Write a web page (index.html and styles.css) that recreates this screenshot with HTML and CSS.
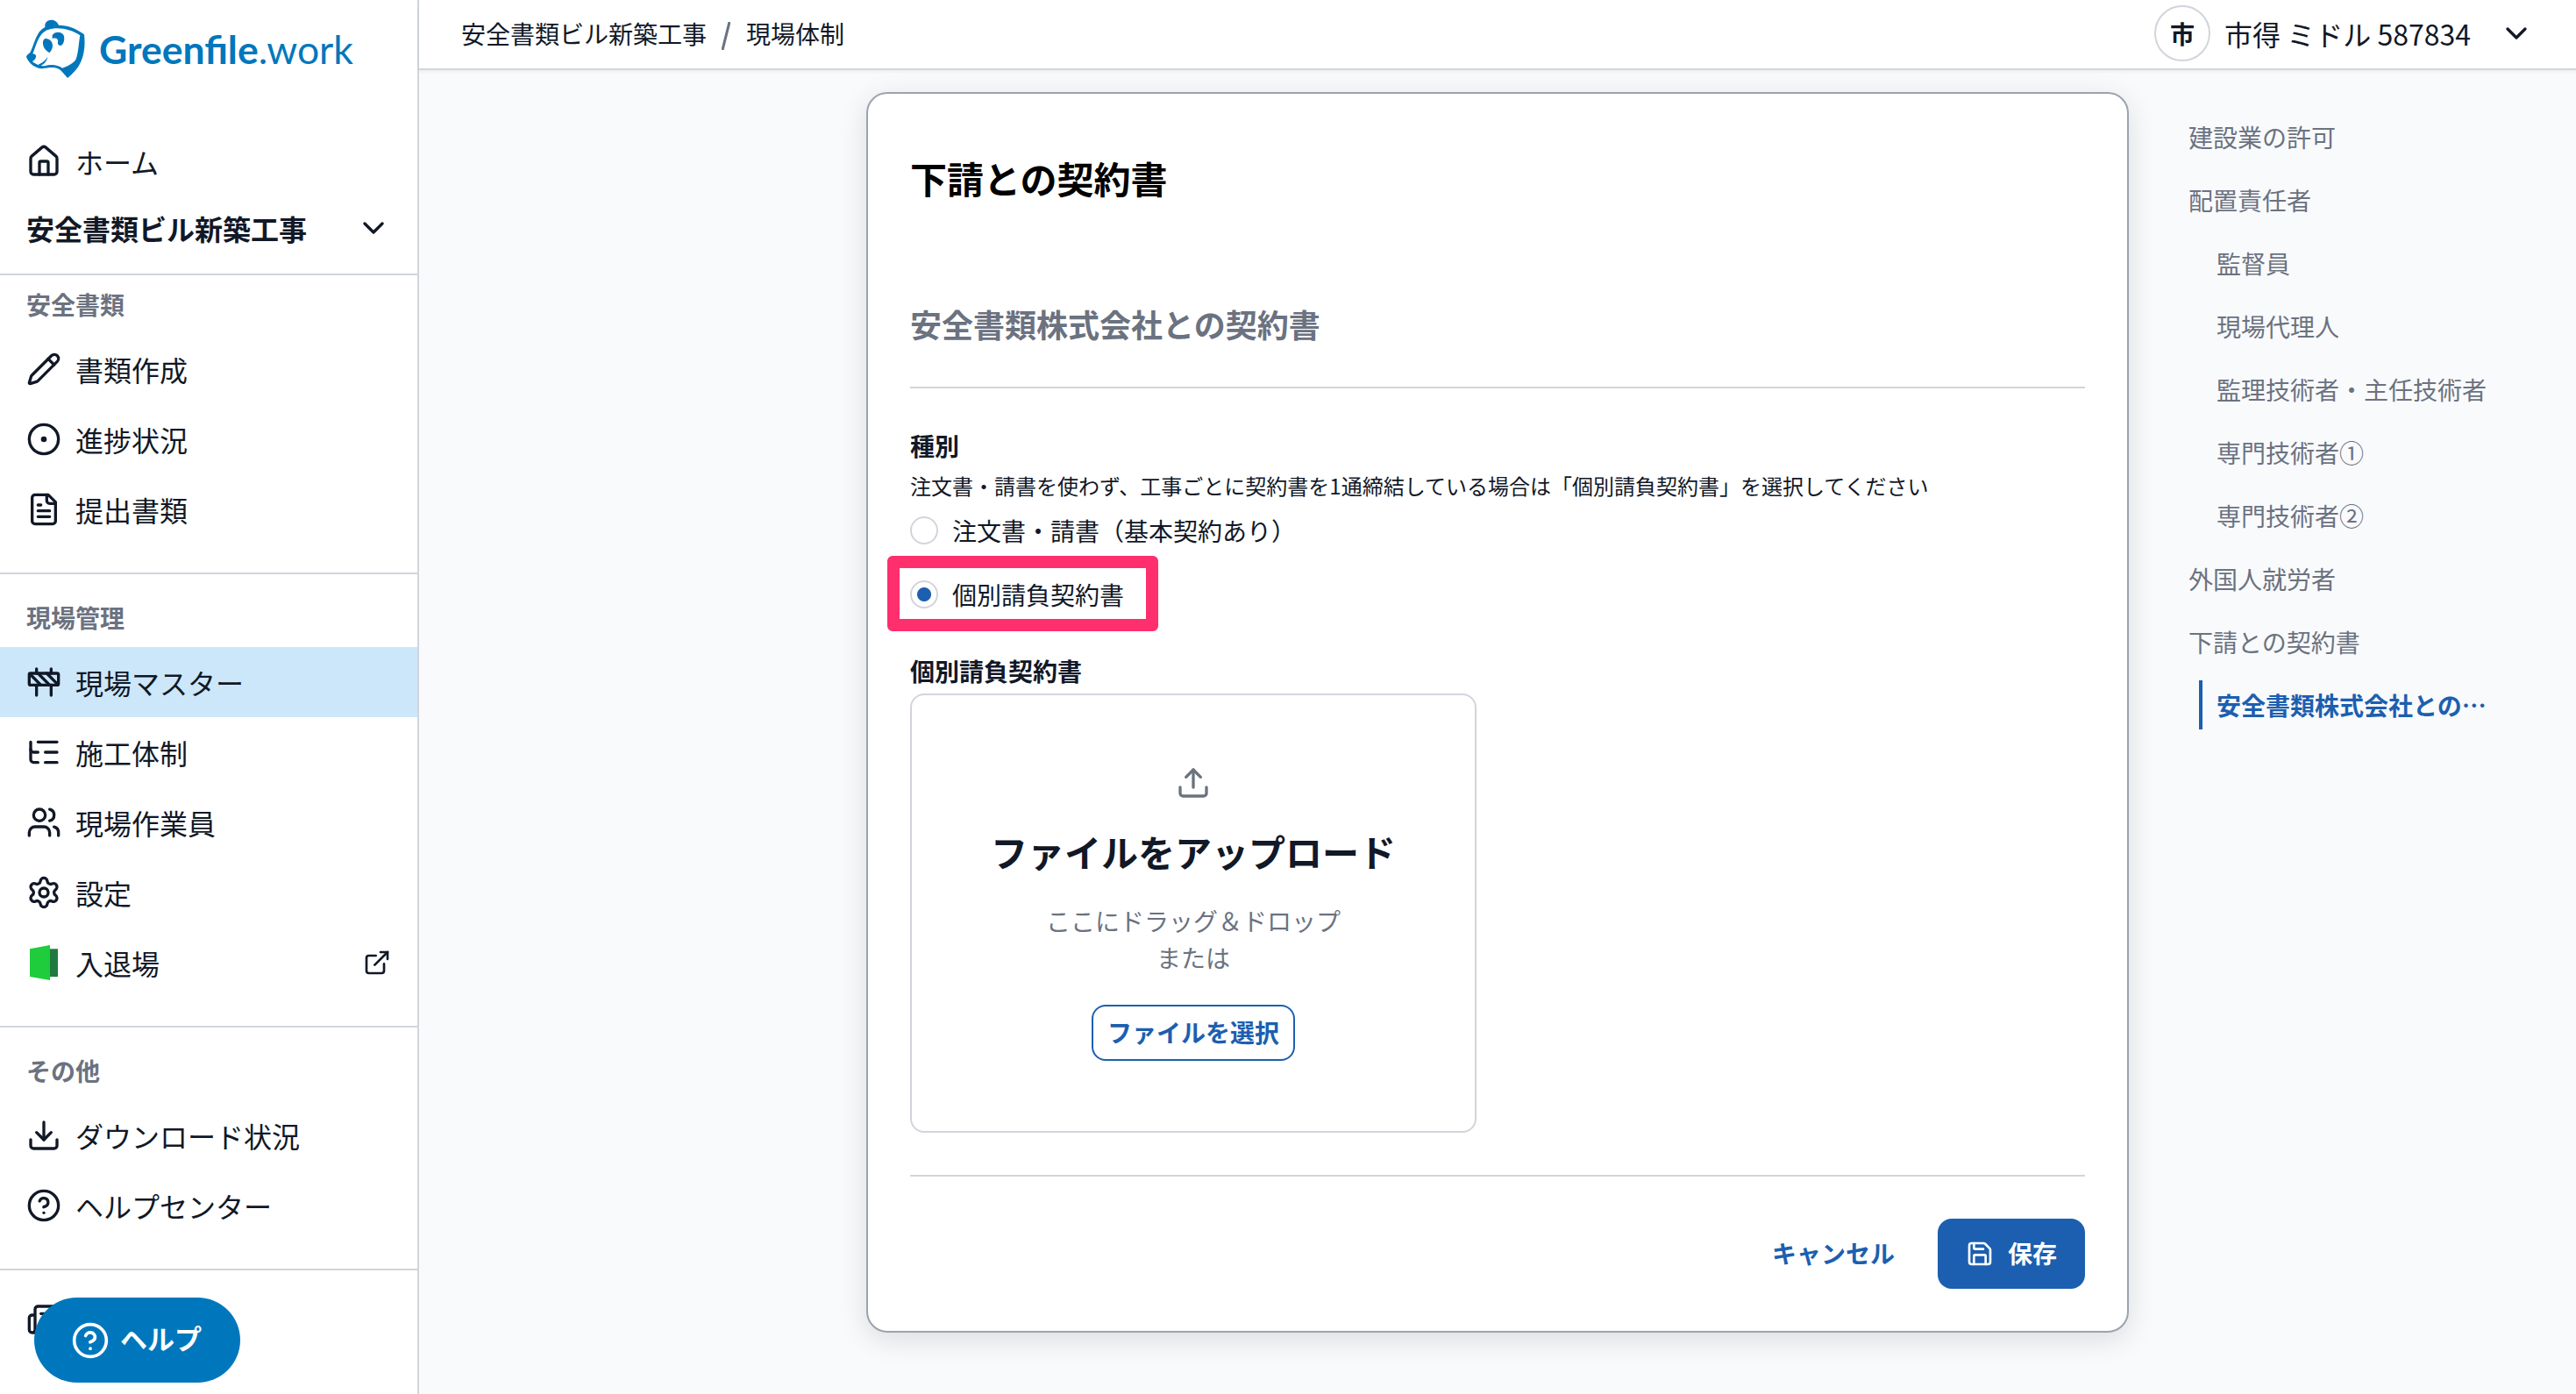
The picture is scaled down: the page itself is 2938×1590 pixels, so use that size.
FILE: index.html
```html
<!DOCTYPE html>
<html lang="ja">
<head>
    <meta charset="UTF-8">
    <meta name="viewport" content="width=device-width, initial-scale=1.0">
    <title>現場体制 | Greenfile.work</title>
    <link rel="stylesheet" href="styles.css">
</head>
<body>

<div class="app">
    <aside class="sidebar">
        <a class="logo" href="#">
            <svg class="logo-mark" viewBox="0 0 240 240">
                <path fill-rule="evenodd" d="M12 147 C14 136 23 137 27 128 C36 108 42 84 52 68 C58 58 66 50 76 45 C74 29 84 20 98 20 C110 20 118 27 123 38 C152 38 184 50 210 70 C214 104 211 136 199 163 C189 186 172 204 153 219 C144 208 135 198 126 190 C111 179 88 183 66 187 C42 186 20 168 12 147 Z M44 150 C47 143 46 138 34 136 C42 118 48 92 60 75 C70 60 84 52 102 50 C136 46 170 56 196 73 C190 108 190 136 181 157 C172 169 152 180 136 185 C116 172 96 171 74 178 C54 178 40 168 32 162 C38 160 42 156 44 150 Z"/>
                <path d="M76 84 C90 82 103 94 102 110 C101 120 96 126 91 133 C80 126 70 116 69 103 C68 94 70 87 76 84 Z"/>
                <path d="M101 72 C110 58 136 58 141 76 C144 92 138 106 130 108 C122 108 118 103 120 96 C122 86 116 80 101 84 Z"/>
                <path d="M85 147 C82 162 72 174 58 178 L52 173 C68 168 77 158 85 147 Z"/>
            </svg>
            <span class="logo-text"><b>Greenfile</b>.work</span>
        </a>

        <nav>
            <a class="nav-item" href="#">
                <svg class="icon" viewBox="0 0 24 24"><path d="M15 21v-8a1 1 0 0 0-1-1h-4a1 1 0 0 0-1 1v8"/><path d="M3 10a2 2 0 0 1 .709-1.528l7-5.999a2 2 0 0 1 2.582 0l7 5.999A2 2 0 0 1 21 10v9a2 2 0 0 1-2 2H5a2 2 0 0 1-2-2z"/></svg>
                <span>ホーム</span>
            </a>
            <div class="site-select">
                <span>安全書類ビル新築工事</span>
                <svg class="icon" viewBox="0 0 24 24"><path d="m6 9 6 6 6-6"/></svg>
            </div>

            <section class="nav-group first">
                <h3>安全書類</h3>
                <a class="nav-item" href="#">
                    <svg class="icon" viewBox="0 0 24 24"><path d="M21.174 6.812a1 1 0 0 0-3.986-3.987L3.842 16.174a2 2 0 0 0-.5.83l-1.321 4.352a.5.5 0 0 0 .623.622l4.353-1.32a2 2 0 0 0 .83-.497z"/><path d="m15 5 4 4"/></svg>
                    <span>書類作成</span>
                </a>
                <a class="nav-item" href="#">
                    <svg class="icon" viewBox="0 0 24 24"><circle cx="12" cy="12" r="10"/><circle cx="12" cy="12" r="1"/></svg>
                    <span>進捗状況</span>
                </a>
                <a class="nav-item" href="#">
                    <svg class="icon" viewBox="0 0 24 24"><path d="M15 2H6a2 2 0 0 0-2 2v16a2 2 0 0 0 2 2h12a2 2 0 0 0 2-2V7Z"/><path d="M14 2v4a2 2 0 0 0 2 2h4"/><path d="M10 9H8M16 13H8M16 17H8"/></svg>
                    <span>提出書類</span>
                </a>
            </section>

            <section class="nav-group">
                <h3>現場管理</h3>
                <a class="nav-item active" href="#">
                    <svg class="icon" viewBox="0 0 24 24"><rect x="2" y="6" width="20" height="8" rx="1"/><path d="M17 14v7M7 14v7M17 3v3M7 3v3M10 14 2.3 6.3M14 6l7.7 7.7M8 6l8 8"/></svg>
                    <span>現場マスター</span>
                </a>
                <a class="nav-item" href="#">
                    <svg class="icon" viewBox="0 0 24 24"><path d="M8 5h13M13 12h8M13 19h8"/><path d="M3 10a2 2 0 0 0 2 2h3"/><path d="M3 5v12a2 2 0 0 0 2 2h3"/></svg>
                    <span>施工体制</span>
                </a>
                <a class="nav-item" href="#">
                    <svg class="icon" viewBox="0 0 24 24"><path d="M16 21v-2a4 4 0 0 0-4-4H6a4 4 0 0 0-4 4v2"/><circle cx="9" cy="7" r="4"/><path d="M22 21v-2a4 4 0 0 0-3-3.87"/><path d="M16 3.13a4 4 0 0 1 0 7.75"/></svg>
                    <span>現場作業員</span>
                </a>
                <a class="nav-item" href="#">
                    <svg class="icon" viewBox="0 0 24 24"><path d="M9.671 4.136a2.34 2.34 0 0 1 4.659 0 2.34 2.34 0 0 0 3.319 1.915 2.34 2.34 0 0 1 2.33 4.033 2.34 2.34 0 0 0 0 3.831 2.34 2.34 0 0 1-2.33 4.033 2.34 2.34 0 0 0-3.319 1.915 2.34 2.34 0 0 1-4.659 0 2.34 2.34 0 0 0-3.32-1.915 2.34 2.34 0 0 1-2.33-4.033 2.34 2.34 0 0 0 0-3.831A2.34 2.34 0 0 1 6.35 6.051a2.34 2.34 0 0 0 3.319-1.915"/><circle cx="12" cy="12" r="3"/></svg>
                    <span>設定</span>
                </a>
                <a class="nav-item" href="#">
                    <svg class="door" viewBox="0 0 40 40"><path fill="#1f7a40" d="M27 4.3h9v31.8h-9z"/><path fill="#1fcc3b" d="M4 4.3 27 0v40L4 36.1z"/></svg>
                    <span>入退場</span>
                    <svg class="icon external" viewBox="0 0 24 24"><path d="M15 3h6v6"/><path d="M10 14 21 3"/><path d="M18 13v6a2 2 0 0 1-2 2H5a2 2 0 0 1-2-2V8a2 2 0 0 1 2-2h6"/></svg>
                </a>
            </section>

            <section class="nav-group">
                <h3>その他</h3>
                <a class="nav-item" href="#">
                    <svg class="icon" viewBox="0 0 24 24"><path d="M21 15v4a2 2 0 0 1-2 2H5a2 2 0 0 1-2-2v-4"/><path d="m7 10 5 5 5-5"/><path d="M12 15V3"/></svg>
                    <span>ダウンロード状況</span>
                </a>
                <a class="nav-item" href="#">
                    <svg class="icon" viewBox="0 0 24 24"><circle cx="12" cy="12" r="10"/><path d="M9.09 9a3 3 0 0 1 5.83 1c0 2-3 3-3 3"/><path d="M12 17h.01"/></svg>
                    <span>ヘルプセンター</span>
                </a>
            </section>

            <section class="nav-group last">
                <a class="nav-item" href="#">
                    <svg class="icon" viewBox="0 0 24 24"><path d="M4 21h16a2 2 0 0 0 2-2V5a2 2 0 0 0-2-2H8a2 2 0 0 0-2 2v14a2 2 0 0 1-4 0v-8a2 2 0 0 1 2-2h2"/><path d="M18 8h-8M18 13h-8"/></svg>
                </a>
            </section>
        </nav>
    </aside>

    <div class="content">
        <header class="topbar">
            <div class="breadcrumb">
                <span>安全書類ビル新築工事</span>
                <svg class="slash" viewBox="0 0 10 32"><path d="M9 0 1 32"/></svg>
                <span>現場体制</span>
            </div>
            <div class="user">
                <span class="avatar">市</span>
                <span class="user-name">市得 ミドル 587834</span>
                <svg class="icon" viewBox="0 0 24 24"><path d="m6 9 6 6 6-6"/></svg>
            </div>
        </header>

        <div class="page">
            <main class="card">
                <h1>下請との契約書</h1>
                <h2>安全書類株式会社との契約書</h2>

                <form>
                    <div class="label">種別</div>
                    <p class="note">注文書・請書を使わず、工事ごとに契約書を1通締結している場合は「個別請負契約書」を選択してください</p>
                    <label class="radio">
                        <input type="radio" name="type">
                        <span>注文書・請書（基本契約あり）</span>
                    </label>
                    <label class="radio marked">
                        <input type="radio" name="type" checked>
                        <span>個別請負契約書</span>
                    </label>

                    <div class="label upload-label">個別請負契約書</div>
                    <div class="upload">
                        <svg class="icon" viewBox="0 0 24 24"><path d="M21 15v4a2 2 0 0 1-2 2H5a2 2 0 0 1-2-2v-4"/><path d="m17 8-5-5-5 5"/><path d="M12 3v12"/></svg>
                        <div class="upload-title">ファイルをアップロード</div>
                        <p>ここにドラッグ＆ドロップ<br>または</p>
                        <button type="button" class="btn-outline">ファイルを選択</button>
                    </div>

                    <div class="actions">
                        <button type="button" class="btn-text">キャンセル</button>
                        <button type="button" class="btn-save">
                            <svg class="icon" viewBox="0 0 24 24"><path d="M15.2 3a2 2 0 0 1 1.4.6l3.8 3.8a2 2 0 0 1 .6 1.4V19a2 2 0 0 1-2 2H5a2 2 0 0 1-2-2V5a2 2 0 0 1 2-2z"/><path d="M17 21v-7a1 1 0 0 0-1-1H8a1 1 0 0 0-1 1v7"/><path d="M7 3v4a1 1 0 0 0 1 1h7"/></svg>
                            <span>保存</span>
                        </button>
                    </div>
                </form>
            </main>

            <nav class="toc">
                <a href="#">建設業の許可</a>
                <a href="#">配置責任者</a>
                <a class="sub" href="#">監督員</a>
                <a class="sub" href="#">現場代理人</a>
                <a class="sub" href="#">監理技術者・主任技術者</a>
                <a class="sub" href="#">専門技術者①</a>
                <a class="sub" href="#">専門技術者②</a>
                <a href="#">外国人就労者</a>
                <a href="#">下請との契約書</a>
                <a class="sub current" href="#">安全書類株式会社との…</a>
            </nav>
        </div>
    </div>
</div>

<button type="button" class="help">
    <svg class="icon" viewBox="0 0 24 24"><circle cx="12" cy="12" r="10"/><path d="M9.09 9a3 3 0 0 1 5.83 1c0 2-3 3-3 3"/><path d="M12 17h.01"/></svg>
    <span>ヘルプ</span>
</button>

</body>
</html>
```
FILE: styles.css
```css
* {
    box-sizing: border-box;
    margin: 0;
    padding: 0;
}
body {
    font-family: "Noto Sans CJK JP", sans-serif;
    font-size: 28px;
    color: #111827;
    background-color: #f9fafc;
    overflow: hidden;
}
a {
    color: inherit;
    text-decoration: none;
}
button {
    font: inherit;
    border: none;
    background: none;
    cursor: pointer;
}
.icon {
    width: 40px;
    height: 40px;
    flex-shrink: 0;
    fill: none;
    stroke: currentColor;
    stroke-width: 2;
    stroke-linecap: round;
    stroke-linejoin: round;
}
.app {
    display: flex;
    height: 1590px;
}

/* sidebar */
.sidebar {
    width: 478px;
    flex-shrink: 0;
    background-color: #fff;
    border-right: 2px solid #d1d5db;
    overflow: hidden;
}
.logo {
    display: flex;
    align-items: center;
    height: 144px;
    padding: 0 0 32px 26px;
    color: #0077bd;
}
.logo-mark {
    width: 80px;
    height: 80px;
    fill: currentColor;
}
.logo-text {
    margin-left: 7px;
    font-family: Lato, sans-serif;
    font-size: 44.5px;
    line-height: 52px;
}
.nav-item {
    display: flex;
    align-items: center;
    gap: 16px;
    height: 80px;
    padding: 0 30px;
    font-size: 32px;
    line-height: 48px;
}
.nav-item.active {
    background-color: #cce7fa;
}
.door {
    width: 40px;
    height: 40px;
}
.icon.external {
    width: 32px;
    height: 32px;
    margin-left: auto;
    stroke-linejoin: miter;
}
.site-select {
    display: flex;
    align-items: center;
    justify-content: space-between;
    height: 88px;
    padding: 0 30px 16px;
    font-size: 32px;
    font-weight: bold;
}
.nav-group {
    padding: 16px 0 32px;
    border-top: 2px solid #d1d5db;
}
.nav-group.first {
    padding-top: 0;
}
.nav-group h3 {
    height: 67px;
    padding-left: 30px;
    font-size: 28px;
    line-height: 67px;
    color: #6b7280;
}

/* header */
.content {
    flex: 1;
    display: flex;
    flex-direction: column;
}
.topbar {
    display: flex;
    justify-content: space-between;
    height: 80px;
    padding: 0 48px 2px;
    background-color: #fff;
    border-bottom: 2px solid #d1d5db;
    box-shadow: 0 2px 4px rgba(0, 0, 0, 0.05);
}
.breadcrumb, .user {
    display: flex;
    align-items: center;
}
.slash {
    width: 10px;
    height: 32px;
    margin: 6px 18px 0 17px;
    fill: none;
    stroke: #6b7280;
    stroke-width: 3;
}
.avatar {
    width: 64px;
    height: 64px;
    margin-right: 16px;
    border: 2px solid #d1d5db;
    border-radius: 50%;
    font-weight: bold;
    line-height: 60px;
    text-align: center;
}
.user-name {
    font-size: 32px;
    margin-right: 32px;
}

/* card */
.page {
    flex: 1;
    display: flex;
    align-items: flex-start;
    padding: 25px 0 0 510px;
}
.card {
    width: 1440px;
    height: 1415px;
    padding: 0 48px;
    background-color: #fff;
    border: 2px solid #9ca3af;
    border-radius: 24px;
    box-shadow: 0 8px 32px rgba(0, 0, 0, 0.12);
}
h1 {
    padding-top: 64px;
    font-size: 42px;
    line-height: 64px;
    color: #000;
}
h2 {
    height: 208px;
    padding-top: 107px;
    font-size: 36px;
    line-height: 54px;
    color: #6b7280;
    border-bottom: 2px solid #d1d5db;
}
.label {
    padding-top: 44px;
    line-height: 42px;
    font-weight: bold;
}
.note {
    font-size: 24px;
    line-height: 36px;
    margin: 7px 0 4px;
}
.radio {
    display: flex;
    align-items: center;
    gap: 16px;
    height: 58px;
}
.radio input {
    appearance: none;
    width: 32px;
    height: 32px;
    border: 2px solid #d1d5db;
    border-radius: 50%;
}
.radio input:checked {
    background: radial-gradient(circle, #1c5fb0 7.5px, #fff 8.5px);
}
/* the frame sticks out to the left of the row */
.radio.marked {
    width: 309px;
    height: 86px;
    margin-left: -26px;
    padding: 2px 0 0 12px;
    border: 14px solid #ff2f6d;
    border-radius: 6px;
}
.upload-label {
    padding-top: 24px;
}
.upload {
    display: flex;
    flex-direction: column;
    align-items: center;
    width: 646px;
    height: 501px;
    margin-top: 5px;
    padding-top: 80px;
    border: 2px solid #d1d5db;
    border-radius: 16px;
    color: #6b7280;
}
.upload-title {
    margin: 26px 0;
    font-size: 42px;
    font-weight: bold;
    line-height: 64px;
    color: #111827;
}
.upload p {
    line-height: 42px;
    text-align: center;
}
.btn-outline {
    width: 232px;
    height: 64px;
    margin-top: 33px;
    padding-bottom: 2px;
    border: 2px solid #1c5fb0;
    border-radius: 16px;
    font-weight: bold;
    line-height: 58px;
    color: #1c5fb0;
}
.actions {
    display: flex;
    justify-content: flex-end;
    align-items: center;
    gap: 49px;
    margin-top: 48px;
    padding-top: 48px;
    border-top: 2px solid #d1d5db;
}
.btn-text {
    padding-bottom: 2px;
    font-weight: bold;
    color: #1c5fb0;
}
.btn-save {
    display: flex;
    align-items: center;
    gap: 16px;
    width: 168px;
    height: 80px;
    padding-left: 32px;
    border-radius: 16px;
    background-color: #1c5fb0;
    color: #fff;
    font-weight: bold;
}
.btn-save span {
    padding-bottom: 2px;
}
.btn-save .icon {
    width: 32px;
    height: 32px;
}

/* right menu */
.toc {
    display: flex;
    flex-direction: column;
    gap: 16px;
    padding: 23px 0 0 68px;
    color: #6b7280;
}
.toc a {
    height: 56px;
    line-height: 56px;
}
.toc .sub {
    padding-left: 32px;
}
.toc .current {
    margin-left: 12px;
    padding-left: 16px;
    border-left: 4px solid #1c5fb0;
    font-weight: bold;
    color: #1c5fb0;
}

/* floating help button */
.help {
    position: fixed;
    left: 39px;
    bottom: 13px;
    display: flex;
    align-items: center;
    width: 235px;
    height: 97px;
    padding-left: 42px;
    border-radius: 49px;
    background-color: #0077bd;
    color: #fff;
    font-size: 31px;
    font-weight: bold;
}
.help span {
    padding-bottom: 6px;
}
.help .icon {
    width: 44px;
    height: 44px;
    margin-right: 12px;
}
```
